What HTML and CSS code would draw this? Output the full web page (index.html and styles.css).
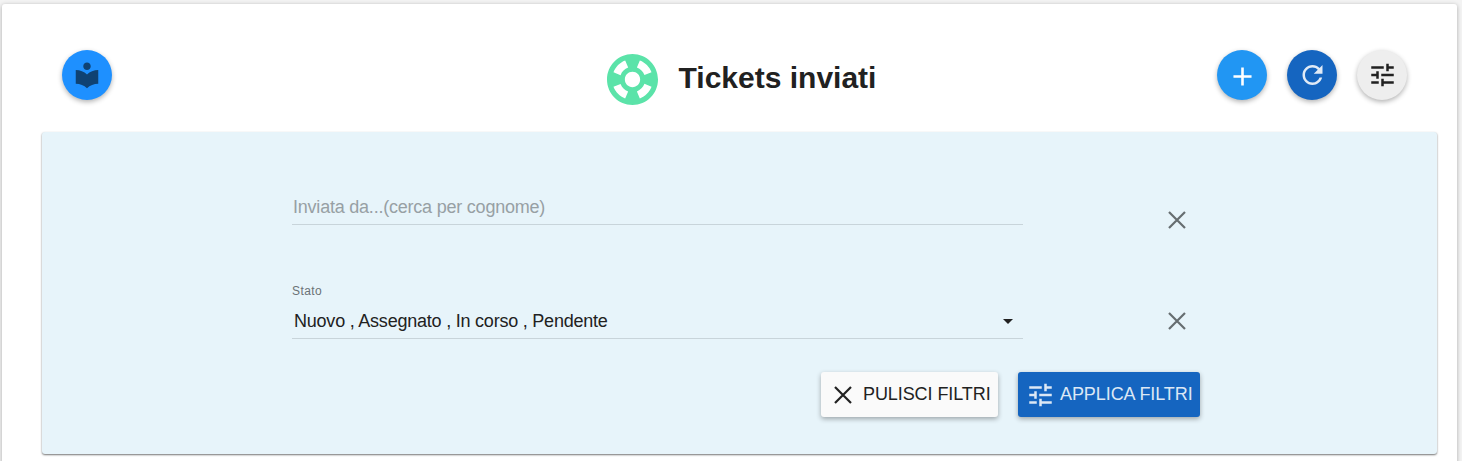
FILE: index.html
```html
<!DOCTYPE html>
<html lang="it">
<head>
<meta charset="utf-8">
<title>Tickets inviati</title>
<link rel="stylesheet" href="styles.css">
</head>
<body>
<svg width="0" height="0" class="sprite" aria-hidden="true">
  <symbol id="tune" viewBox="0 0 24 24"><path d="M3 17v2h6v-2H3zM3 5v2h10V5H3zm10 16v-2h8v-2h-8v-2h-2v6h2zM7 9v2H3v2h4v2h2V9H7zm14 4v-2H11v2h10zm-6-4h2V7h4V5h-4V3h-2v6z"/></symbol>
  <symbol id="close" viewBox="0 0 18 18"><path d="M1 1L17 17M17 1L1 17" fill="none" stroke="currentColor" stroke-width="2.2"/></symbol>
</svg>
<main class="card">
  <header class="toolbar">
    <button class="fab fab-guide" aria-label="Guida"><svg class="icon" viewBox="0 0 24 24"><path d="M12 11.55C9.64 9.35 6.48 8 3 8v11c3.48 0 6.64 1.35 9 3.55 2.36-2.19 5.52-3.55 9-3.55V8c-3.48 0-6.64 1.35-9 3.55zM12 8c1.66 0 3-1.34 3-3s-1.34-3-3-3-3 1.34-3 3 1.34 3 3 3z"/></svg></button>
    <div class="heading">
      <svg class="support" viewBox="2 2 20 20"><path d="M12 2C6.48 2 2 6.48 2 12s4.480 10 10 10 10-4.480 10-10S17.520 2 12 2zm7.460 7.120l-2.780 1.150c-.51-1.360-1.580-2.440-2.950-2.940l1.150-2.780c2.100.8 3.770 2.470 4.580 4.570zM12 15c-1.660 0-3-1.340-3-3s1.340-3 3-3 3 1.340 3 3-1.340 3-3 3zM9.130 4.540l1.170 2.780c-1.380.5-2.470 1.590-2.980 2.970L4.540 9.130c.81-2.110 2.480-3.780 4.590-4.590zM4.540 14.870l2.780-1.150c.51 1.380 1.590 2.460 2.970 2.960l-1.170 2.780c-2.100-.81-3.770-2.480-4.580-4.590zm10.340 4.590l-1.150-2.780c1.370-.51 2.450-1.590 2.950-2.970l2.780 1.170c-.81 2.100-2.480 3.770-4.580 4.580z"/></svg>
      <h1>Tickets inviati</h1>
    </div>
    <div class="actions">
      <button class="fab fab-add" aria-label="Aggiungi"><svg class="icon" viewBox="0 0 24 24"><path d="M19 13h-6v6h-2v-6H5v-2h6V5h2v6h6v2z"/></svg></button>
      <button class="fab fab-refresh" aria-label="Aggiorna"><svg class="icon" viewBox="0 0 24 24"><path d="M17.650 6.350C16.200 4.900 14.210 4 12 4c-4.420 0-7.990 3.580-7.990 8s3.570 8 7.990 8c3.730 0 6.840-2.550 7.730-6h-2.080c-.82 2.330-3.040 4-5.650 4-3.310 0-6-2.690-6-6s2.690-6 6-6c1.660 0 3.140.69 4.220 1.780L13 11h7V4l-2.350 2.350z"/></svg></button>
      <button class="fab fab-filter" aria-label="Filtri"><svg class="icon"><use href="#tune"/></svg></button>
    </div>
  </header>
  <section class="panel">
    <div class="row">
      <input class="field search" type="text" placeholder="Inviata da...(cerca per cognome)">
      <button class="clear" aria-label="Cancella"><svg class="x"><use href="#close"/></svg></button>
    </div>
    <div class="row row-state">
      <div class="state">
        <span class="label">Stato</span>
        <div class="field select"><span>Nuovo , Assegnato , In corso , Pendente</span><i class="arrow"></i></div>
      </div>
      <button class="clear" aria-label="Cancella"><svg class="x"><use href="#close"/></svg></button>
    </div>
    <div class="buttons">
      <button class="btn btn-reset"><svg class="x"><use href="#close"/></svg><span>PULISCI FILTRI</span></button>
      <button class="btn btn-apply"><svg class="icon"><use href="#tune"/></svg><span>APPLICA FILTRI</span></button>
    </div>
  </section>
</main>
</body>
</html>
```
FILE: styles.css
```css
* { box-sizing: border-box; }
html, body { height: 100%; }
body {
  margin: 0;
  padding: 4px 5px 0 2px;
  overflow: hidden;
  background: #f3f3f3;
  color: #212121;
  font-family: "Liberation Sans", Arial, sans-serif;
}
button { border: 0; padding: 0; font: inherit; color: inherit; background: none; }
svg { display: block; fill: currentColor; flex: none; }
.sprite { position: absolute; }
.card {
  height: 480px;
  padding: 46px 20px 0 40px;
  background: #fff;
  border-radius: 3px;
  box-shadow: 0 1px 4px rgba(0, 0, 0, .3);
}
.toolbar {
  display: grid;
  grid-template-columns: 1fr auto 1fr;
  height: 82px;
  padding: 0 30px 0 20px;
}
.fab {
  display: grid;
  place-items: center;
  width: 50px;
  height: 50px;
  border-radius: 50%;
  box-shadow: 0 2px 5px rgba(0, 0, 0, .3);
}
.icon { width: 31px; height: 30px; }
.fab-guide { background: #1e90ff; color: #0f4273; }
.fab-guide .icon { width: 30px; height: 30px; }
.fab-add { background: #2196f3; color: #fff; }
.fab-add .icon { height: 31px; margin-top: 3px; }
.fab-refresh { background: #1565c0; color: #e0eaf6; }
.fab-filter { background: #eee; }
.heading { display: flex; gap: 21px; padding: 4px 0 0 14px; }
.support { width: 51px; height: 51px; color: #5be3a9; }
h1 { margin: 6px 0 0; font-size: 30px; line-height: 36px; white-space: nowrap; }
.actions { display: flex; justify-content: flex-end; gap: 20px; }
.panel {
  width: 1395px;
  height: 322px;
  padding: 58px 237px 0 250px;
  background: #e7f4fa;
  border-radius: 3px;
  box-shadow: 0 1px 2px rgba(0, 0, 0, .55);
}
.row { display: flex; justify-content: space-between; }
.field {
  width: 731px;
  height: 35px;
  border: 0;
  border-bottom: 1px solid #c8d4da;
  background: none;
  font: 18px "Liberation Sans", Arial, sans-serif;
  letter-spacing: -.22px;
}
.search { padding: 0 1px; outline: 0; }
.search::placeholder { color: #97a0a4; opacity: 1; }
.clear { display: grid; place-items: center; width: 46px; height: 46px; color: #666d70; }
.x { width: 18px; height: 18px; }
.row .clear { margin-top: 7px; }
.row-state { margin-top: 39px; }
.row-state .clear { margin-top: 16px; }
.state { display: flex; flex-direction: column; }
.label { height: 20px; font-size: 12px; line-height: 19px; letter-spacing: .4px; color: #6b7276; }
.select { display: flex; align-items: center; justify-content: space-between; padding: 2px 10px 0 2px; height: 37px; }
.arrow { border: 5px solid transparent; border-top-color: #212121; border-bottom: 0; }
.buttons { display: flex; justify-content: flex-end; gap: 20px; margin-top: 28px; }
.btn {
  display: flex;
  align-items: center;
  height: 45px;
  border-radius: 3px;
  box-shadow: 0 2px 5px rgba(0, 0, 0, .32);
  font-size: 18px;
  letter-spacing: -.08px;
  white-space: nowrap;
}
.btn-reset { width: 177px; padding: 0 0 0 13px; gap: 11px; background: #fafafa; }
.btn-apply { width: 182px; padding-left: 7px; gap: 4px; background: #1565c0; color: #dce8f5; }
```
